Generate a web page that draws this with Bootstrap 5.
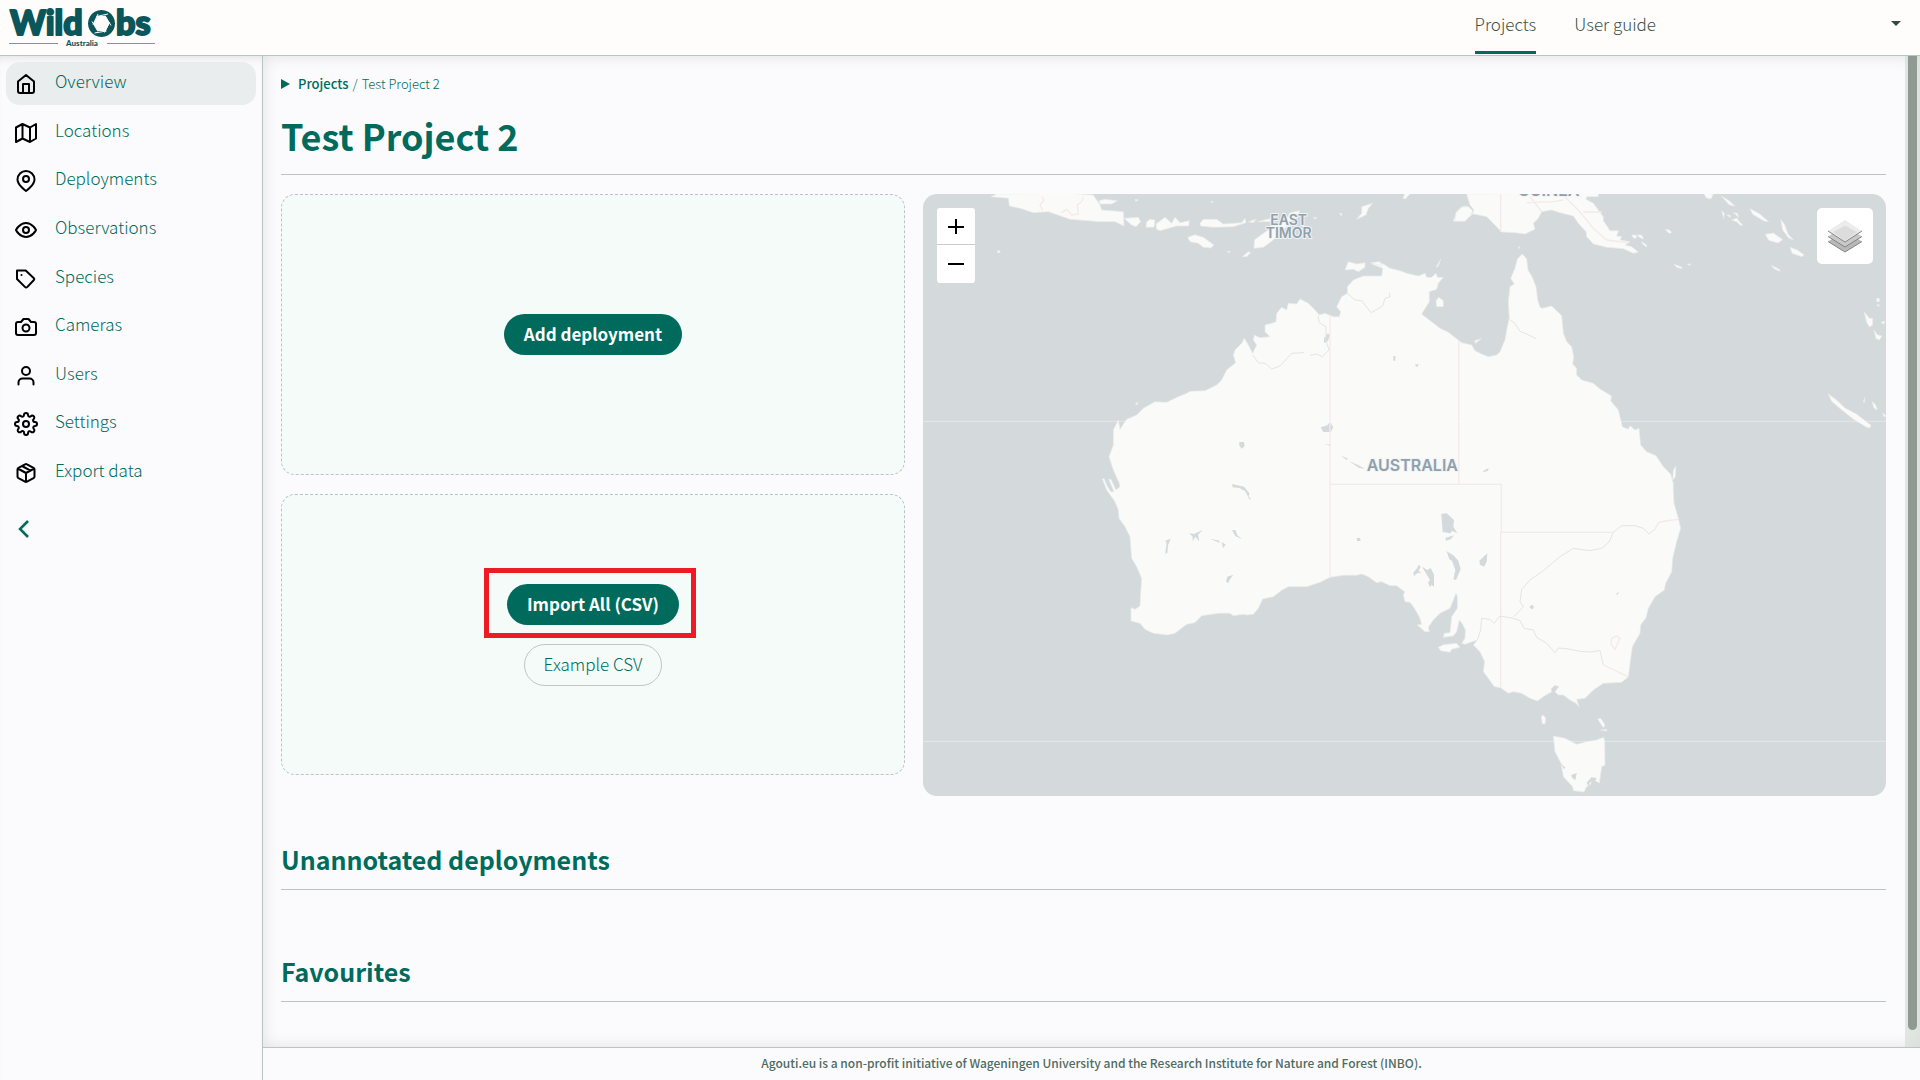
<!DOCTYPE html>
<html lang="en">
<head>
<meta charset="utf-8">
<meta name="viewport" content="width=device-width, initial-scale=1">
<title>Test Project 2 - WildObs Australia</title>
<link href="https://cdn.jsdelivr.net/npm/bootstrap@5.3.0/dist/css/bootstrap.min.css" rel="stylesheet">
<style>
  :root { --green: #006b5c; --line: #b9c5c4; --page: #fbfbfe; --ink: #3c5245; }
  body { font-family: "Noto Sans CJK SC", "Source Sans Pro", sans-serif; font-weight: 300; font-size: 17px; line-height: 24px; color: var(--green); background: var(--page); }
  a { color: inherit; text-decoration: none; }
  .topbar { height: 56px; background: #fefdfc; border-bottom: 1px solid var(--line); padding: 0 19px 0 8px; }
  .brand-art { width: 150px; height: 44px; overflow: visible; }
  .topnav { gap: 38px; margin-right: 235px; }
  .topnav a { color: var(--ink); line-height: 24px; padding: 12px 0 15px; border-bottom: 3px solid transparent; }
  .topnav a.current { border-color: var(--green); }
  .caret-btn { border: 0; background: none; padding: 0; width: 10px; height: 24px; margin-bottom: 8px; }
  .caret-btn::after { content: ""; display: block; border: 5px solid transparent; border-top-color: #354a3c; border-bottom: 0; }
  .sidebar { width: 263px; border-right: 1px solid var(--line); padding: 6px; box-shadow: inset 0 8px 10px -6px rgba(0,0,0,.1); }
  .side-list { height: 432px; }
  .side-link { height: 43px; border-radius: 14px; padding: 0 8px; gap: 17px; }
  .side-link.current { background: #e9eded; }
  .side-link svg { width: 24px; height: 24px; stroke: #000; margin-top: 1px; }
  .side-link span { margin-bottom: 5px; }
  .line-icon { fill: none; stroke-width: 2; stroke-linecap: round; stroke-linejoin: round; }
  .fold-btn { border: 0; background: none; padding: 0; margin: 25px 0 0 9px; color: var(--green); width: 16px; height: 20px; display: block; }
  .fold-btn svg { display: block; }
  .scroll-zone { box-shadow: inset 0 0 16px rgba(0,0,0,.11); }
  .content { padding: 18px 19px 0 18px; }
  .crumbs { font-size: 13px; line-height: 20px; gap: 4px; }
  .crumbs b { font-weight: 500; }
  .crumbs svg { margin-right: 4px; }
  .page-title { font-weight: 700; font-size: 36px; line-height: 48px; margin: 17px 0 19px; padding-bottom: 15px; border-bottom: 1px solid var(--line); }
  .section-title { font-weight: 700; font-size: 25px; line-height: 36px; margin: 63px 0 0; padding-bottom: 12px; border-bottom: 1px solid var(--line); }
  .board + .section-title { margin-top: 45px; }
  .tile-col { flex: 0 0 40%; padding-right: 18px; gap: 19px; }
  .drop-tile { height: 281px; border: 1px dashed var(--line); border-radius: 14px; background: #f5fbf9; gap: 19px; }
  .pill { border-radius: 21px; line-height: 24px; padding: 7px 19px 9px; font-size: 17px; color: var(--green); font-weight: 300; border: 1px solid #bcc8c5; background: transparent; }
  .pill-solid { background: var(--green); color: #fff; font-weight: 700; border: 0; padding: 8px 20px 9px; }
  .marked { position: relative; }
  .marked::after { content: ""; position: absolute; inset: -16px -17px -13px -23px; border: 5px solid #ed1c24; pointer-events: none; }
  .map-box { height: 602px; border-radius: 14px; background: #d4d9db; position: relative; overflow: hidden; }
  .map-box > svg { width: 100%; height: 100%; display: block; }
  .zoom-ctl { position: absolute; left: 14px; top: 14px; width: 38px; border-radius: 3px; background: #fff; }
  .zoom-ctl button { display: flex; width: 100%; height: 38px; border: 0; background: none; align-items: center; justify-content: center; padding: 0; }
  .zoom-ctl button:first-child { height: 37px; border-bottom: 1px solid #ccc; }
  .layer-ctl { position: absolute; right: 13px; top: 14px; width: 56px; height: 56px; border: 0; border-radius: 5px; background: #fff; padding: 0; display: flex; align-items: center; justify-content: center; }
  .scroll-track { width: 15px; background: rgba(214,220,214,.65); }
  .scroll-thumb { width: 9px; height: 98.3%; margin: 0 auto; border-radius: 0 0 5px 5px; background: #909a92; }
  .foot { height: 33px; border-top: 1px solid var(--line); font-size: 12px; line-height: 30px; font-weight: 500; color: #4f6b60; }
</style>
</head>
<body class="vh-100 d-flex flex-column overflow-hidden">
<header class="topbar d-flex align-items-center flex-shrink-0">
  <a href="#" aria-label="WildObs Australia" class="me-auto">
    <svg class="brand-art d-block" viewBox="0 0 150 44">
      <g fill="#0b565b" stroke="#0b565b" stroke-width="2" stroke-linejoin="round" font-family="Lato, sans-serif" font-weight="900" font-size="34">
        <text x="2" y="29">Wild</text>
        <text x="108" y="29">bs</text>
      </g>
      <path d="M93.500 4a13.500 13.500 0 1 0 .01 0zM89.500 10h8l4 7.500-4 7.500h-8l-4-7.500z" fill="#0b565b" fill-rule="evenodd"/>
      <g stroke="#fefdfc" stroke-width="1" fill="none">
        <path d="M85 18.500 90 8M88.500 10.500 100 8M97 9.500l6 10M101.500 16.500l-5 10M98.500 25l-12 2M90 25.500l-6-10"/>
      </g>
      <path d="M1 37.500h49M99 37.500h48" stroke="#6f9f9c" stroke-width="1"/>
      <text x="74" y="40" text-anchor="middle" fill="#0b565b" font-family="Lato, sans-serif" font-weight="900" font-size="8">Australia</text>
    </svg>
  </a>
  <nav class="topnav d-flex align-self-stretch align-items-start">
    <a class="current" href="#">Projects</a>
    <a href="#">User guide</a>
  </nav>
  <button class="caret-btn d-flex align-items-center" type="button" aria-label="Account menu"></button>
</header>

<div class="d-flex flex-grow-1" style="min-height:0">
  <aside class="sidebar flex-shrink-0">
    <nav class="side-list d-flex flex-column justify-content-between">
      <a class="side-link current d-flex align-items-center" href="#"><svg class="line-icon" viewBox="0 0 24 24"><path d="M4 9.500 12 3l8 6.500V19a2 2 0 0 1-2 2H6a2 2 0 0 1-2-2zM9 21v-9h6v9"/></svg><span>Overview</span></a>
      <a class="side-link d-flex align-items-center" href="#"><svg class="line-icon" viewBox="0 0 24 24"><path d="M2 6.500 8.500 3l7.500 3.500L22 3v14.500L16 21l-7.500-3.500L2 21zM8.500 3v14.500M16 6.500V21"/></svg><span>Locations</span></a>
      <a class="side-link d-flex align-items-center" href="#"><svg class="line-icon" viewBox="0 0 24 24"><path d="M20.500 10.500C20.500 16 12 22 12 22s-8.500-6-8.500-11.500a8.500 8.500 0 0 1 17 0z"/><circle cx="12" cy="10" r="3"/></svg><span>Deployments</span></a>
      <a class="side-link d-flex align-items-center" href="#"><svg class="line-icon" viewBox="0 0 24 24"><path d="M2 12s3.500-7 10-7 10 7 10 7-3.500 7-10 7-10-7-10-7z"/><circle cx="12" cy="12" r="3"/></svg><span>Observations</span></a>
      <a class="side-link d-flex align-items-center" href="#"><svg class="line-icon" viewBox="0 0 24 24"><path d="M3 3.500h8.700l8.200 7.700a1.300 1.300 0 0 1 0 1.800l-6.500 6.900a1.800 1.800 0 0 1-2.500 0L3 12z"/><path d="M7.500 8h.01"/></svg><span>Species</span></a>
      <a class="side-link d-flex align-items-center" href="#"><svg class="line-icon" viewBox="0 0 24 24"><path d="M14.500 4h-5L7 7H4a2 2 0 0 0-2 2v9a2 2 0 0 0 2 2h16a2 2 0 0 0 2-2V9a2 2 0 0 0-2-2h-3z"/><circle cx="12" cy="13" r="3.500"/></svg><span>Cameras</span></a>
      <a class="side-link d-flex align-items-center" href="#"><svg class="line-icon" viewBox="0 0 24 24"><path d="M19.500 20.500V18.500a4 4 0 0 0-4-4h-7a4 4 0 0 0-4 4v2"/><circle cx="12" cy="7" r="4"/></svg><span>Users</span></a>
      <a class="side-link d-flex align-items-center" href="#"><svg class="line-icon" viewBox="0 0 24 24"><circle cx="12" cy="12" r="3"/><path d="M19.400 15a1.650 1.650 0 0 0 .33 1.820l.06.06a2 2 0 1 1-2.830 2.830l-.06-.06a1.650 1.650 0 0 0-2.820 1.170V21a2 2 0 0 1-4 0v-.09a1.650 1.650 0 0 0-2.900-1.260l-.06.06a2 2 0 1 1-2.830-2.830l.06-.06a1.650 1.650 0 0 0-1.170-2.820H3a2 2 0 0 1 0-4h.09a1.650 1.650 0 0 0 1.260-2.900l-.06-.06a2 2 0 1 1 2.830-2.830l.06.06A1.650 1.650 0 0 0 10 3.090V3a2 2 0 0 1 4 0v.09a1.650 1.650 0 0 0 2.820 1.170l.06-.06a2 2 0 1 1 2.830 2.830l-.06.06A1.650 1.650 0 0 0 20.910 10H21a2 2 0 0 1 0 4h-.09a1.650 1.650 0 0 0-1.510 1z"/></svg><span>Settings</span></a>
      <a class="side-link d-flex align-items-center" href="#"><svg class="line-icon" viewBox="0 0 24 24"><path d="M20.500 15.500v-7a2 2 0 0 0-1-1.700l-6.500-3.500a2 2 0 0 0-2 0L4.500 6.800a2 2 0 0 0-1 1.700v7a2 2 0 0 0 1 1.700l6.500 3.500a2 2 0 0 0 2 0l6.500-3.500a2 2 0 0 0 1-1.700zM3.800 7.500 12 12l8.200-4.500M12 12v9M8 5l8.500 4.700"/></svg><span>Export data</span></a>
    </nav>
    <button class="fold-btn" type="button" aria-label="Collapse menu"><svg width="16" height="20" viewBox="0 0 16 20" fill="none" stroke="currentColor" stroke-width="2.500"><path d="M13 2 5 10l8 8"/></svg></button>
  </aside>

  <div class="d-flex flex-column flex-grow-1" style="min-width:0">
    <div class="scroll-zone d-flex flex-grow-1" style="min-height:0">
      <main class="content flex-grow-1">
        <nav class="crumbs d-flex align-items-center" aria-label="Breadcrumb">
          <svg width="9" height="10" viewBox="0 0 9 10"><path d="M0 0 9 5 0 10z" fill="#006b5c"/></svg>
          <a href="#"><b>Projects</b></a><span>/</span><span>Test Project 2</span>
        </nav>
        <h1 class="page-title">Test Project 2</h1>
        <div class="board d-flex align-items-start">
          <div class="tile-col d-flex flex-column">
            <div class="drop-tile d-flex flex-column align-items-center justify-content-center">
              <button class="pill pill-solid" type="button">Add deployment</button>
            </div>
            <div class="drop-tile d-flex flex-column align-items-center justify-content-center">
              <div class="marked"><button class="pill pill-solid d-block" type="button">Import All (CSV)</button></div>
              <button class="pill" type="button">Example CSV</button>
            </div>
          </div>
          <div class="map-box flex-grow-1">
            <svg viewBox="9 12 2889 1806" preserveAspectRatio="xMidYMid slice" role="img" aria-label="Map of Australia">
              <g fill="#fafaf8" stroke="#e8ecea" stroke-width="2" stroke-linejoin="round">
                <!-- mainland -->
                <path d="M1390 222 1410 235 1440 242 1460 250 1495 258 1515 250 1520 262 1535 262 1548 250 1552 262 1570 262 1555 280 1550 298 1528 305 1528 335 1505 372 1525 388 1560 415 1585 427 1625 458 1655 465 1665 482 1685 492 1705 500 1730 495 1740 485 1755 450 1762 410 1768 385 1765 335 1770 290 1783 282 1772 265 1785 235 1792 207 1807 192 1820 207 1824 240 1837 262 1848 290 1853 330 1860 352 1867 355 1895 348 1925 377 1930 430 1940 455 1955 470 1961 500 1958 522 1970 535 1970 555 1985 570 2020 580 2040 597 2075 618 2072 632 2095 660 2107 710 2125 718 2130 707 2145 720 2157 715 2162 765 2180 785 2208 797 2230 830 2252 853 2260 880 2260 900 2262 940 2275 985 2282 1015 2270 1055 2258 1105 2255 1145 2237 1180 2233 1200 2205 1220 2185 1255 2178 1283 2162 1305 2160 1330 2137 1370 2130 1420 2125 1460 2105 1477 2050 1480 2020 1500 1995 1525 1970 1528 1977 1550 1968 1540 1950 1530 1930 1515 1915 1515 1905 1505 1917 1490 1905 1486 1893 1496 1895 1505 1870 1520 1852 1533 1830 1525 1805 1510 1780 1505 1765 1510 1742 1493 1723 1490 1705 1465 1690 1445 1694 1415 1680 1385 1660 1365 1672 1350 1635 1363 1625 1360 1635 1345 1636 1320 1628 1303 1618 1290 1610 1325 1600 1338 1570 1342 1573 1330 1590 1328 1595 1280 1612 1255 1612 1220 1608 1210 1590 1255 1560 1270 1540 1290 1525 1312 1528 1325 1515 1325 1492 1305 1505 1303 1498 1280 1480 1250 1470 1237 1455 1235 1450 1215 1454 1205 1430 1187 1410 1187 1385 1175 1370 1178 1345 1160 1325 1152 1310 1156 1270 1156 1230 1162 1200 1177 1160 1190 1105 1190 1085 1201 1060 1220 1028 1227 1015 1255 1000 1273 980 1275 970 1273 940 1277 930 1270 895 1270 845 1277 825 1298 800 1303 765 1330 742 1335 700 1330 675 1318 660 1300 633 1293 633 1253 645 1258 660 1248 662 1210 665 1165 650 1130 635 1105 630 1040 615 1010 597 985 595 960 585 935 560 900 547 867 552 865 560 885 572 905 582 905 566 868 573 868 588 900 600 890 598 880 580 840 567 800 580 765 580 720 595 690 600 718 620 688 650 675 670 655 705 635 740 637 775 620 800 610 810 604 855 602 890 585 905 570 920 540 947 518 940 495 945 480 965 460 973 445 985 465 998 490 1010 465 1000 450 1003 435 1020 443 1050 440 1035 425 1035 405 1055 400 1068 395 1070 370 1085 352 1100 360 1105 340 1130 342 1140 327 1165 340 1185 360 1198 375 1215 370 1240 380 1258 380 1262 365 1250 350 1265 320 1282 310 1282 290 1300 270 1330 258 1385 258 1388 235 1355 222 1370 216z"/>
                <!-- Tasmania and the southern islands -->
                <path d="M1900 1638 1935 1645 1970 1663 2000 1655 2030 1650 2050 1642 2054 1650 2055 1725 2045 1730 2038 1780 2020 1768 2010 1785 2000 1790 1992 1806 1960 1802 1958 1790 1930 1760 1923 1720 1905 1685z"/>
                <path d="M1864 1580 1870 1575 1877 1585 1875 1602 1867 1602zM2033 1587 2042 1585 2055 1605 2050 1613zM2042 1620l18-2v5zM1555 1372 1570 1364 1610 1360 1620 1372 1595 1378 1590 1387 1562 1382z"/>
                <!-- Timor Sea islands -->
                <path d="M1275 240 1285 215 1310 222 1335 218 1335 232 1315 245 1300 238zM1352 218 1380 215 1385 228zM1002 175 1003 150 1030 130 1060 110 1100 85 1110 68 1140 62 1130 80 1100 110 1060 150 1030 172zM967 200 985 185 992 188 980 200zM803 142 825 134 850 142 882 165 872 174 850 172 835 160 810 155zM1310 88 1325 70 1325 50 1358 40 1345 55 1338 75zM1548 232 1562 208 1555 228z"/>
                <!-- Java and the Lesser Sundas -->
                <path d="M213 20 230 12 450 10 520 15 540 45 545 60 610 65 612 108 585 95 540 95 450 88 385 65 340 68 300 55 268 48 265 25zM537 32 555 28 592 32 575 42 540 42zM612 85 655 82 662 95 648 110 635 105zM680 95 690 88 705 90 702 112 678 112zM708 102 735 82 755 100 765 82 780 98 808 92 806 108 770 108 720 122 710 118zM840 100 850 88 890 88 910 102 965 98 975 85 978 98 940 110 880 112 842 108zM985 95 1008 88 1000 98zM1012 95 1055 85 1050 95z"/>
                <!-- New Guinea -->
                <path d="M1640 12 1650 45 1662 60 1655 75 1635 90 1600 94 1610 65 1625 50 1640 48 1650 70 1700 80 1745 126 1785 128 1815 132 1845 118 1840 100 1855 85 1865 65 1895 60 1920 68 1960 78 1975 100 1998 125 2000 140 2020 162 2060 172 2110 176 2140 190 2155 186 2135 170 2115 165 2130 155 2100 150 2105 140 2090 138 2096 122 2070 122 2050 92 2050 80 2020 40 1998 28 2000 20 2035 20 2035 8z"/>
                <path d="M1605 94 1608 70 1625 52 1645 50 1658 62 1650 78 1635 94z"/>
                <path d="M2135 135l12 0 4 8-10 2zM2150 135l15 0 6 12-8-2zM2165 155l15 10 0 6-12-8zM2235 118l14 2 6 8-8 2zM2350 8l30 5-8 14-14-4zM2404 18l25 15 16 16-18-5zM2405 62l8 8-2 16zM2420 75l10 0 2 8zM2435 90l16-6 6 10 12 12-8 0-10-10zM2440 68l12 2 4 12zM2490 56l28 15 28 24-14-2-34-20zM2582 88l12 16 10 28 16 18-14-6-18-24zM2536 133l24-4 28 20-14 10-28-8zM2610 172l22 8 20 14-6 6-30-10zM2262 222l24 10 0 4-16-4zM2302 222l10 0-4 5zM2554 226l24 12 2 6-18-8zM2832 365l16 20 10 0 0 20-10 6-8-14zM2862 420l10 14 14 4-8 12-10-4zM2883 397l12-4-4 10zM2870 325l8 0 0 10-8 0zM2870 344l8 0-2 6zM2725 612l22 16 28 26 34 18 44 34-4 8-12-4-36-22-38-30-28-24zM2856 635l10 8 6 16-10-4zM2834 622l0 16-4-2zM2888 668l10 10-6 2zM1455 8l-6 18 8 0 16-18zM1795 170l6 2-4 4zM1664 452l20-6-18 14zM1548 332l8-10 14 10 0 18-20 0zM2260 840l8-12-2 32-8 10zM232 182l8 0 0 6-8 0zM1258 70l8 0-2 8zM921 184l10 0-4 5zM646 642l8-6-2 8zM645 28l10 2-8 4zM873 34l8 2-8 2zM1180 82l12 2-8 3z"/>
              </g>
              <!-- lakes -->
              <g fill="#d4d9db">
                <path d="M1202 712 1222 706 1230 696 1240 712 1232 726 1210 726zM1215 762l18 2 0 5zM958 756l14 0 2 12-8 8-8-8zM1420 498l6 0 0 14-6 0zM1484 524l12-2-4 10zM1212 445l10-14 8 2-6 20-12 6zM1262 796 1284 806 1280 810zM1288 814 1312 824 1335 836 1318 834zM936 882l16 4 20 4 16 20-2 10 8 8-6 0-12-24-18-10-20-2zM1688 844l18-10-2 8-12 4zM1564 972 1580 970 1602 990 1600 1010 1612 1030 1596 1022 1592 1030 1568 1026zM1576 1044l26-8-10 12-14 4zM1580 1084 1600 1096 1615 1112 1622 1138 1608 1170 1600 1168 1606 1140 1596 1112 1588 1108zM1678 1112 1702 1090 1700 1116 1692 1130 1680 1124zM1480 1148l10-12 6-12 6 6-6 12 8 8-10-2-12 10zM1506 1130l16 10 10-6 10 20 0 36-8-6-4 8-6-14 6-8zM1310 1044l10 0 2 8-10 2zM1828 1250l10-6 4 10-8 4zM2088 1212l10-8-6 10 4 4zM736 1052l16-6-4 10-4 10-2 24-6 0 4-30zM808 1030l14 2 26-12-14 14 4 20-12-14-8 14 0-14zM870 1046l28 6 0 6zM905 1056l12 8-8 10zM936 1020l10 0 6 16 14 12-20-10zM918 1174l4-14 18-6-10 14-6 12zM1923 1720l14 14-6 2zM1954 1755l16-6-4 22-10-8zM2000 1778l14-16 16 2-8 14-12-2-4 14z"/>
              </g>
              <!-- state borders, rivers -->
              <g fill="none" stroke="#f4eaea" stroke-width="4">
                <path d="M1230 375V1162M1616 452V883M1230 883H1744V1027M1742 1027V1492M1744 1027H2080M2205 1018 2215 998 2235 993 2275 988M2050 1425 2124 1460M1742 12V126M1830 20 1866 66M1925 12 1960 45 1980 66 2020 115 2060 150 2120 158M1990 66H2045M1820 38 1900 35 1930 30M365 20 372 30 360 45 368 60M425 68 440 58 455 75 475 72 472 45 485 35 490 22M2075 1345 2090 1338 2100 1345 2085 1378 2073 1362z"/>
              </g>
              <g fill="none" stroke="#e4e5e4" stroke-width="3" stroke-linejoin="round">
                <path d="M2080 1027 2105 1007 2145 1007 2170 1015 2187 1032 2205 1018M2080 1027 2068 1055 2045 1075 2010 1082 1960 1075 1920 1100 1870 1142 1830 1170 1805 1198 1800 1235 1810 1250 1782 1280M1672 1350 1682 1320 1685 1285 1710 1288 1722 1300 1740 1278 1780 1285 1800 1292 1812 1315 1840 1320 1850 1342 1880 1360 1905 1388 1915 1374 1940 1376 1980 1384 2010 1386 2040 1382 2050 1425M998 495 1015 518 1035 520 1055 537 1080 528 1115 490 1152 488M1170 496 1190 492 1207 500 1227 480 1218 450 1218 410 1198 398 1194 378M1282 310 1305 330 1325 332 1353 368 1388 348 1395 325 1410 320 1408 308M1770 390 1785 400 1800 424 1820 432 1848 446"/>
              </g>
              <path d="M9 694H2898M9 1654H2898" stroke="#fff" stroke-opacity=".4" stroke-width="3"/>
              <g fill="#8fa1ac" stroke="#f2f4f4" stroke-width="6" stroke-linejoin="round" paint-order="stroke" font-family="Inter, sans-serif" font-weight="600" text-anchor="middle">
                <text x="1477" y="844" font-size="48">AUSTRALIA</text>
                <text x="1106" y="105" font-size="42">EAST</text>
                <text x="1106" y="143" font-size="42">TIMOR</text>
                <text x="1886" y="17" font-size="48">GUINEA</text>
              </g>
            </svg>
            <div class="zoom-ctl">
              <button type="button" aria-label="Zoom in"><svg width="16" height="16" viewBox="0 0 16 16"><path d="M0 9h16M8 1v15" stroke="#000" stroke-width="2"/></svg></button>
              <button type="button" aria-label="Zoom out"><svg width="16" height="16" viewBox="0 0 16 16"><path d="M0 8h16" stroke="#000" stroke-width="2"/></svg></button>
            </div>
            <button class="layer-ctl" type="button" aria-label="Layers">
              <svg width="34" height="34" viewBox="0 0 34 34"><g stroke="#848484" stroke-width="1"><path d="M0 22.500 17 12l17 10.500L17 33z" fill="#b8b8b8" stroke="none"/><path d="M0 22.500 17 33l17-10.500" fill="none"/><path d="M0 17.500 17 7l17 10.500L17 28z" fill="#c8c8c8" stroke="none"/><path d="M0 17.500 17 28l17-10.500" fill="none"/><path d="M0 12 17 1l17 11-17 11z" fill="#ececec" stroke="none"/><path d="M5 13 17 6.500 29 13 17 22z" fill="#dcdcdc" stroke="none"/><path d="M0 12l17 11 17-11" fill="none"/></g></svg>
            </button>
          </div>
        </div>
        <h2 class="section-title">Unannotated deployments</h2>
        <h2 class="section-title">Favourites</h2>
      </main>
      <div class="scroll-track flex-shrink-0"><div class="scroll-thumb"></div></div>
    </div>
    <footer class="foot text-center flex-shrink-0">Agouti.eu is a non-profit initiative of Wageningen University and the Research Institute for Nature and Forest (INBO).</footer>
  </div>
</div>
<script src="https://cdn.jsdelivr.net/npm/bootstrap@5.3.0/dist/js/bootstrap.bundle.min.js"></script>
</body>
</html>
